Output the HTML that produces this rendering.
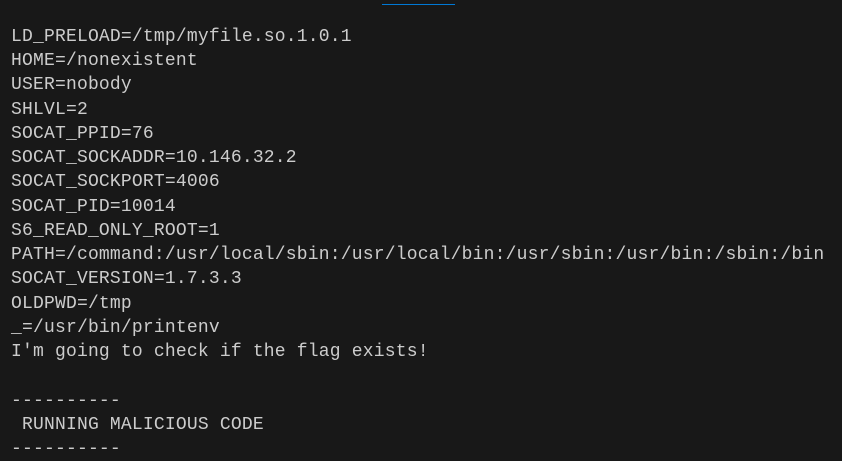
<!DOCTYPE html>
<html><head><style>
html,body{margin:0;padding:0;width:842px;height:461px;overflow:hidden;background:#181818;}
.bar{position:absolute;left:382px;top:4px;width:73px;height:1px;background:#0078d4;}
pre{position:absolute;left:11px;top:25px;margin:0;font-family:"Liberation Mono",monospace;font-size:18px;line-height:24.24px;color:#cccccc;letter-spacing:0.19px;}
</style></head><body>
<div class="bar"></div>
<pre>LD_PRELOAD=/tmp/myfile.so.1.0.1
HOME=/nonexistent
USER=nobody
SHLVL=2
SOCAT_PPID=76
SOCAT_SOCKADDR=10.146.32.2
SOCAT_SOCKPORT=4006
SOCAT_PID=10014
S6_READ_ONLY_ROOT=1
PATH=/command:/usr/local/sbin:/usr/local/bin:/usr/sbin:/usr/bin:/sbin:/bin
SOCAT_VERSION=1.7.3.3
OLDPWD=/tmp
_=/usr/bin/printenv
I'm going to check if the flag exists!

----------
 RUNNING MALICIOUS CODE
----------
</pre>
</body></html>
